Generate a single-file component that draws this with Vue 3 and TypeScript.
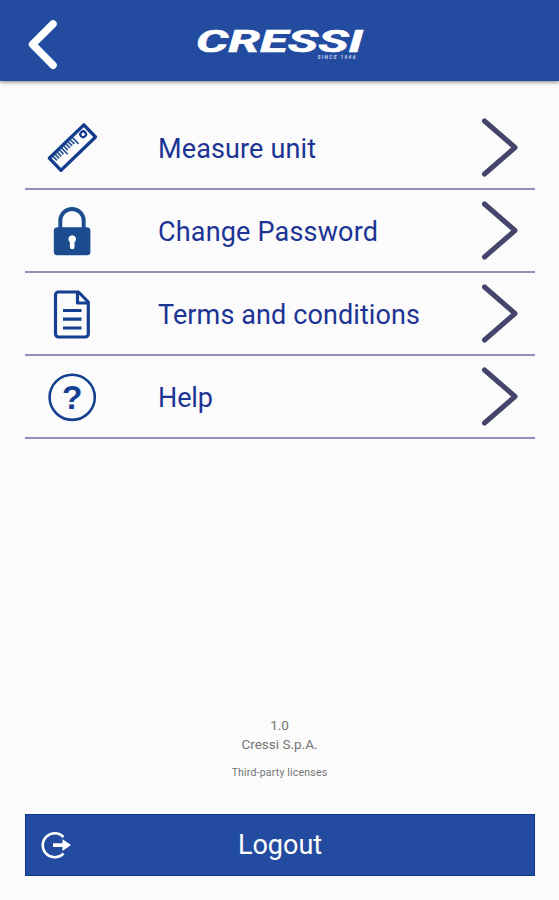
<script setup lang="ts">
type IconName = 'ruler' | 'lock' | 'document' | 'help'

interface MenuItem {
  icon: IconName
  label: string
  width: number
}

const items: MenuItem[] = [
  { icon: 'ruler', label: 'Measure unit', width: 158 },
  { icon: 'lock', label: 'Change Password', width: 220 },
  { icon: 'document', label: 'Terms and conditions', width: 262 },
  { icon: 'help', label: 'Help', width: 55 },
]

// Tick marks along the upper edge of the ruler: [offset, length]
const ticks: [number, number][] = [
  [7, 6], [10, 6], [13, 6], [16, 6], [19, 9], [22, 6], [25, 6], [28, 6], [31, 6], [34, 9],
]
</script>

<template>
  <div class="screen">
    <header class="bar">
      <button class="back" aria-label="Back">
        <svg width="34" height="54" viewBox="0 0 34 54">
          <path d="M29 7 8.500 27.300 29 48.200" />
        </svg>
      </button>
      <svg class="logo" width="180" height="50" viewBox="0 0 180 50">
        <text class="brand" x="6" y="35.500" textLength="167" lengthAdjust="spacingAndGlyphs">CRESSI</text>
        <text class="since" x="127.500" y="42.500" textLength="38">SINCE 1946</text>
      </svg>
    </header>

    <nav class="menu">
      <a v-for="item in items" :key="item.icon" class="row">
        <svg class="icon" width="50" height="50" viewBox="0 0 50 50">
          <g v-if="item.icon === 'ruler'" transform="translate(2.300 35.200) rotate(-44)">
            <rect x="0" y="0" width="48" height="16.800" class="line" />
            <path v-for="[x, len] in ticks" :key="x" :d="`M${x - 3} 1v${len}`" class="tick" />
            <circle cx="41" cy="6.300" r="2.800" class="ring" />
          </g>
          <g v-else-if="item.icon === 'lock'" class="lock">
            <path d="M13.300 23V14.700a11.700 11.700 0 0 1 23.400 0V23" class="shackle" />
            <rect x="6.800" y="21.300" width="36.600" height="28" rx="3.500" />
            <path d="M25.200 29.200a4 4 0 0 0-2.300 7.200V41a2.300 2.300 0 0 0 4.600 0v-4.600a4 4 0 0 0-2.300-7.200z" class="keyhole" />
          </g>
          <g v-else-if="item.icon === 'document'">
            <path d="M11.500 3H31.500L41.300 13V45a3 3 0 0 1-3 3H11.500a3 3 0 0 1-3-3V6a3 3 0 0 1 3-3z" class="doc" />
            <path d="M30.500 3.500V14h10.500" class="doc" />
            <path d="M16 21.500h18.500M16 30.200h18.500M16 39h18.500" class="doc" />
          </g>
          <g v-else>
            <circle cx="25.200" cy="25.300" r="22.600" class="circle" />
            <text x="25.200" y="36.800" text-anchor="middle" class="mark">?</text>
          </g>
        </svg>
        <svg class="label" :width="item.width + 6" height="40">
          <text x="0" y="29.500" :textLength="item.width">{{ item.label }}</text>
        </svg>
        <svg class="chevron" width="40" height="62" viewBox="0 0 40 62">
          <path d="M6.500 4 37 30.500 6.500 57" />
        </svg>
      </a>
    </nav>

    <footer class="about">
      <p>1.0</p>
      <p>Cressi S.p.A.</p>
      <a class="licenses">Third-party licenses</a>
    </footer>

    <button class="logout">
      <svg width="32" height="30" viewBox="0 0 32 30">
        <path d="M23.500 7A12 12 0 1 0 23.500 23.500" class="arc" />
        <path d="M13 13.200h9.500v-4L31 15l-8.500 6v-4H13z" class="arrow" />
      </svg>
      <span>Logout</span>
    </button>
  </div>
</template>

<style>
body {
  background: #fbfbfb;
}
</style>

<style scoped>
.screen {
  box-sizing: border-box;
  height: 900px;
  display: flex;
  flex-direction: column;
  overflow: hidden;
  padding-bottom: 24px;
  background: #fbfbfb;
  font-family: Roboto, 'Liberation Sans', sans-serif;
}

button {
  padding: 0;
  border: 0;
  font: inherit;
  background: none;
}

.bar {
  flex: none;
  height: 81px;
  display: grid;
  grid-template-columns: 190px 180px 1fr;
  align-items: start;
  background: #234ca0;
  box-shadow: 0 1px 4px rgba(0, 0, 0, 0.5);
}

.back {
  display: flex;
  padding: 17px 0 0 24px;
}

.back path {
  fill: none;
  stroke: #fff;
  stroke-width: 7.500;
  stroke-linecap: round;
  stroke-linejoin: round;
}

.logo {
  margin-top: 16px;
  fill: #fff;
}

.brand {
  font: italic 700 30.500px Roboto, 'Liberation Sans', sans-serif;
  stroke: #fff;
  stroke-width: 0.600;
}

.since {
  font: italic 700 5px Roboto, 'Liberation Sans', sans-serif;
  fill: #c9d5f0;
}

.menu {
  margin: 26px 24px 0 25px;
}

.row {
  box-sizing: border-box;
  height: 83px;
  display: flex;
  align-items: center;
  padding: 0 17px 0 22px;
  border-bottom: 2px solid #8e91bd;
}

.icon {
  flex: none;
  overflow: visible;
}

.line {
  fill: none;
  stroke: #123c8c;
  stroke-width: 3.300;
  stroke-linejoin: round;
}

.tick {
  stroke: #2b5597;
  stroke-width: 1.700;
}

.ring {
  fill: none;
  stroke: #123c8c;
  stroke-width: 2.200;
}

.lock {
  fill: #1c4c90;
}

.lock .shackle {
  fill: none;
  stroke: #1c4c90;
  stroke-width: 4;
}

.lock .keyhole {
  fill: #fff;
}

.doc {
  fill: none;
  stroke: #153f90;
  stroke-width: 3.200;
  stroke-linejoin: round;
}

.circle {
  fill: none;
  stroke: #153f90;
  stroke-width: 2.600;
}

.mark {
  fill: #153f90;
  font: 700 33.500px 'Liberation Sans', sans-serif;
}

.label {
  margin-left: 61px;
  fill: #1c3494;
  font-size: 27px;
}

.chevron {
  margin-left: auto;
}

.chevron path {
  fill: none;
  stroke: #45446a;
  stroke-width: 5;
  stroke-linecap: round;
  stroke-linejoin: round;
}

.about {
  margin-top: auto;
  padding-bottom: 32px;
  text-align: center;
  font-size: 13.500px;
  line-height: 19px;
  color: #747474;
}

.about p {
  margin: 0;
}

.licenses {
  display: block;
  margin-top: 9px;
  font-size: 10.500px;
  letter-spacing: 0.200px;
}

.logout {
  flex: none;
  height: 62px;
  margin: 0 24px 0 25px;
  display: grid;
  grid-template-columns: 48px 1fr 48px;
  align-items: center;
  background: #234ca0;
  box-shadow: inset 0 0 0 1px #0e3692;
  color: #fff;
  font-size: 27px;
}

.logout svg {
  margin-left: 15px;
}

.arc {
  fill: none;
  stroke: #fff;
  stroke-width: 2.600;
}

.arrow {
  fill: #fff;
}
</style>
